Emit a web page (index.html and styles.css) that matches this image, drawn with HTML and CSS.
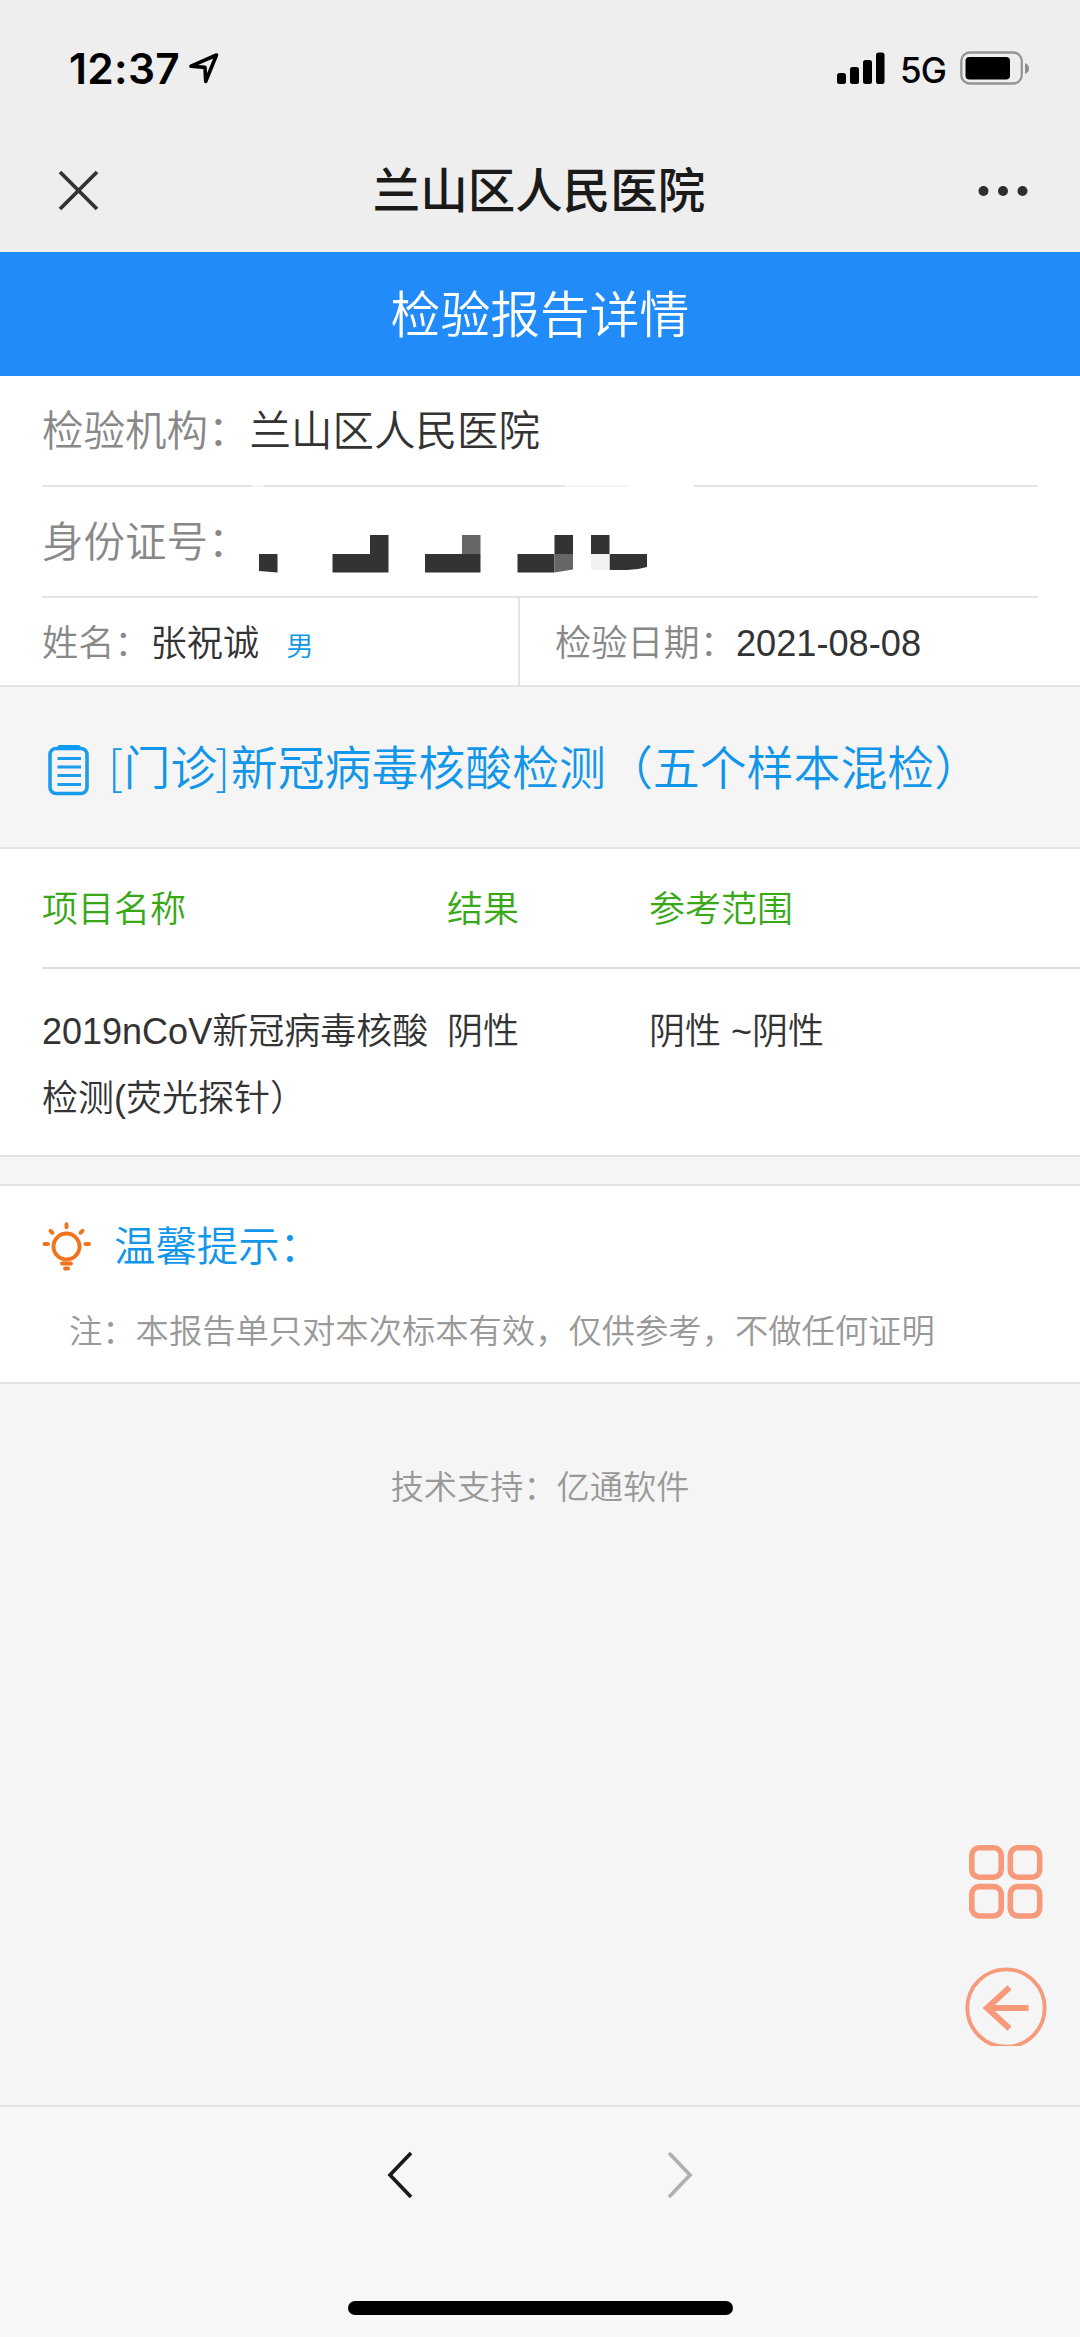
FILE: index.html
```html
<!DOCTYPE html>
<html lang="zh-CN">
<head>
<meta charset="utf-8">
<title>检验报告详情</title>
<link rel="stylesheet" href="styles.css">
</head>
<body>
<div class="screen">
  <div class="status-bar">
    <div class="status-left">
      <span class="clock">12:37</span>
      <svg class="location" width="32" height="34" viewBox="0 0 32 34"><path d="M28.500 4 L3 15.200 L17 16.400 L17.700 30.500 Z" fill="none" stroke="#000" stroke-width="3.600" stroke-linejoin="round"/></svg>
    </div>
    <div class="status-right">
      <svg width="48" height="34" viewBox="0 0 48 34"><rect x="0" y="22" width="9" height="11" rx="2.500"/><rect x="13" y="16" width="9" height="17" rx="2.500"/><rect x="26" y="9" width="9" height="24" rx="2.500"/><rect x="39" y="1.500" width="8.500" height="31.500" rx="2.500"/></svg>
      <span class="network">5G</span>
      <svg width="70" height="34" viewBox="0 0 70 34"><rect x="1.300" y="1.500" width="60.500" height="31" rx="8.500" fill="none" stroke="#949494" stroke-width="2.300"/><rect x="5.500" y="6" width="44.500" height="22.500" rx="4"/><path d="M65 12 q4 1.500 4 5.500 t-4 5.500z" fill="#8c8c8c"/></svg>
    </div>
  </div>
  <header class="nav-bar">
    <svg width="42" height="42" viewBox="0 0 42 42"><path d="M2 2 L39 39 M39 2 L2 39" stroke="#333" stroke-width="3.800"/></svg>
    <h1 class="nav-title">兰山区人民医院</h1>
    <svg width="50" height="12" viewBox="0 0 50 12" fill="#2e2e2e"><circle cx="5.500" cy="6" r="5"/><circle cx="25" cy="6" r="5"/><circle cx="44.500" cy="6" r="5"/></svg>
  </header>

  <h2 class="page-title">检验报告详情</h2>

  <section class="info">
    <div class="info-row info-row-first"><span class="label">检验机构：</span><span>兰山区人民医院</span></div>
    <svg class="divider" width="996" height="2" viewBox="0 0 996 2"><g fill="#e3e3e3"><rect width="210" height="2"/><rect x="222" width="301" height="2"/><rect x="652" width="344" height="2"/></g><path d="M523 0h64v2h-64z M210 0h12v2h-12z" fill="#f5f5f5"/></svg>
    <div class="info-row info-row-id"><span class="label">身份证号：</span>
      <svg class="mosaic" width="388" height="38" viewBox="0 0 388 38"><path fill="#333" d="M0 19h18.500v18.500l-18.500-1.500z M73.500 19H111V0h18.500v37.500h-56z M166 19h55.500v18.500H166z M258.500 19h37V0h18.500v19h-18.500v18.500h-37z M332 0h18.500v19H388v13q-10 3-20 3h-17.500V19H332z"/><path fill="#666" d="M203 0h18.500v19H203z M295.500 19H314v15.500l-18.500 3z"/><path fill="#f2f2f2" d="M332 19h18.500v16H332z"/></svg>
    </div>
    <div class="person">
      <div class="person-name"><span class="label">姓名：</span><span>张祝诚</span><span class="gender">男</span></div>
      <div class="person-date"><span class="label">检验日期：</span><span>2021-08-08</span></div>
    </div>
  </section>

  <h3 class="report-title">
    <svg width="42" height="52" viewBox="0 0 42 52"><rect x="2" y="4.500" width="37" height="45" rx="6" fill="none" stroke="#1b9cec" stroke-width="3.600"/><path d="M9.500 6V3q0-2 2-2h19q2 0 2 2v3z" fill="#0e9bf3"/><path d="M9.500 14.500h23.500M9.500 23h23.500M9.500 31.500h23.500M9.500 40.500h23.500" stroke="#1b9cec" stroke-width="3.200"/></svg>
    <span class="report-name"><span class="bracket">[</span>门诊<span class="bracket">]</span>新冠病毒核酸检测（五个样本混检）</span>
  </h3>

  <section class="results">
    <div class="grid-row head"><span>项目名称</span><span>结果</span><span>参考范围</span></div>
    <div class="grid-row result"><span>2019nCoV新冠病毒核酸<br>检测(荧光探针）</span><span>阴性</span><span>阴性 ~阴性</span></div>
  </section>

  <section class="tips">
    <h4 class="tips-title">
      <svg width="50" height="50" viewBox="0 0 50 50" fill="none" stroke="#f0731f" stroke-width="3.900" stroke-linecap="round"><circle cx="24.500" cy="24.500" r="13"/><path d="M24.500 2.200v3 M8.500 8.800l2 2 M40.500 8.800l-2 2 M2.500 22h3.500 M43.500 22h3.500 M20 41.500h9 M23 46.500h3"/></svg>
      <span>温馨提示：</span>
    </h4>
    <p class="note">注：本报告单只对本次标本有效，仅供参考，不做任何证明</p>
  </section>

  <footer class="support">技术支持：亿通软件</footer>

  <div class="floating">
    <svg width="74" height="74" viewBox="0 0 74 74" fill="none" stroke="#f79a7b" stroke-width="5.600"><rect x="2.800" y="2.800" width="29.400" height="29.400" rx="7.500"/><rect x="41.300" y="2.800" width="29.400" height="29.400" rx="7.500"/><rect x="2.800" y="41.600" width="29.400" height="29.400" rx="7.500"/><rect x="41.300" y="41.600" width="29.400" height="29.400" rx="7.500"/></svg>
    <svg width="82" height="79" viewBox="0 0 82 79" fill="none" stroke="#f79a7b"><circle cx="41" cy="41" r="38.700" stroke-width="3.800"/><path d="M44.500 20.500L22 41l22.500 20.500 M22 41H63.500" stroke-width="6"/></svg>
  </div>

  <nav class="bottom-bar">
    <div class="history">
      <svg width="28" height="50" viewBox="0 0 28 50"><path d="M25 3L4 25l21 22" fill="none" stroke="#1a1a1a" stroke-width="3.700"/></svg>
      <svg width="28" height="50" viewBox="0 0 28 50"><path d="M3 3l21 22L3 47" fill="none" stroke="#b0b0b0" stroke-width="3.700"/></svg>
    </div>
    <div class="home-indicator"></div>
  </nav>
</div>
</body>
</html>
```
FILE: styles.css
```css
* { box-sizing: border-box; }
body { margin: 0; }
h1, h2, h3, h4, p { margin: 0; font-weight: 350; }
svg { display: block; flex: none; }
.screen {
  position: relative;
  display: flex;
  flex-direction: column;
  width: 1080px;
  height: 2337px;
  overflow: hidden;
  background: #f5f5f5;
  color: #333;
  font-family: "Liberation Sans", "Noto Sans CJK SC", sans-serif;
  font-weight: 350;
  white-space: nowrap;
}

/* Status bar and navigation */
.status-bar {
  display: flex;
  justify-content: space-between;
  height: 130px;
  padding: 51px 50px 0 69px;
  background: #eee;
  font-family: Inter, sans-serif;
  color: #000;
}
.status-left, .status-right { display: flex; height: 34px; align-items: center; }
.clock { width: 119px; padding-top: 2px; font-size: 42.500px; font-weight: 600; line-height: 34px; letter-spacing: 0.300px; }
.network { width: 45px; margin: 4px 15px 0 15px; font-size: 35px; font-weight: 500; line-height: 34px; letter-spacing: -1px; }
.nav-bar {
  display: flex;
  justify-content: space-between;
  align-items: center;
  height: 122px;
  padding: 0 52px 0 58px;
  background: #eee;
}
.nav-title { padding-top: 2px; font-size: 47.500px; font-weight: 500; line-height: 60px; color: #1a1a1a; }

.page-title {
  height: 124px;
  background: #218cf9;
  color: #fff;
  font-size: 49.800px;
  line-height: 129px;
  text-align: center;
}

/* Patient and institution */
.info { height: 311px; background: #fff; border-bottom: 2px solid #e3e3e3; }
.label { color: #888; }
.info-row { display: flex; align-items: center; padding-left: 42px; font-size: 41.500px; }
.info-row-first { height: 109px; padding-bottom: 5px; }
.info-row-id { height: 111px; margin: 0 42px; padding: 0 0 5px; border-bottom: 2px solid #e3e3e3; }
.divider { margin-left: 42px; }
.mosaic { margin: 29px 0 0 9px; }
.person { display: flex; height: 87px; padding-left: 42px; font-size: 36.200px; line-height: 92px; }
.person-name { display: flex; width: 478px; border-right: 2px solid #e3e3e3; }
.gender { margin-left: 27px; padding-top: 3px; color: #0e97ea; font-size: 27.500px; }
.person-date { display: flex; padding-left: 35px; }

.report-title {
  display: flex;
  gap: 20px;
  align-items: center;
  height: 160px;
  padding: 5px 0 0 48px;
  color: #1296ea;
  font-size: 46.900px;
}
.report-name { padding-bottom: 9px; }
.bracket { display: inline-block; width: 13.500px; font-family: "Noto Sans CJK SC", sans-serif; font-weight: 300; text-indent: -2px; }

/* Test results */
.results { height: 310px; border: solid #e3e3e3; border-width: 2px 0; background: #fff; font-size: 36px; }
.grid-row { display: grid; grid-template-columns: 405px 202px 1fr; margin-left: 42px; }
.head { height: 120px; border-bottom: 2px solid #dedede; color: #38a817; line-height: 122px; }
.result { padding-top: 30px; line-height: 66.500px; }

/* Notice */
.tips { height: 200px; margin-top: 27px; border: solid #e3e3e3; border-width: 2px 0; background: #fff; }
.tips-title { display: flex; align-items: center; gap: 22px; padding: 36px 0 0 42px; color: #1296ea; font-size: 41.400px; line-height: 50px; }
.note { padding: 35px 0 0 69px; color: #999; font-size: 33.300px; line-height: 50px; }
.support { margin-top: 79px; color: #999; font-size: 33.200px; line-height: 50px; text-align: center; }

/* Shortcuts hovering over the page */
.floating { position: absolute; right: 33px; top: 1845px; display: flex; flex-direction: column; align-items: center; gap: 48px; }

.bottom-bar {
  display: flex;
  flex-direction: column;
  align-items: center;
  height: 232px;
  margin-top: auto;
  border-top: 2px solid #e1e1e1;
  background: #f7f7f7;
}
.history { display: flex; gap: 252px; padding-top: 43px; }
.home-indicator { width: 385px; height: 14px; margin-top: 101px; border-radius: 7px; background: #000; }
```
